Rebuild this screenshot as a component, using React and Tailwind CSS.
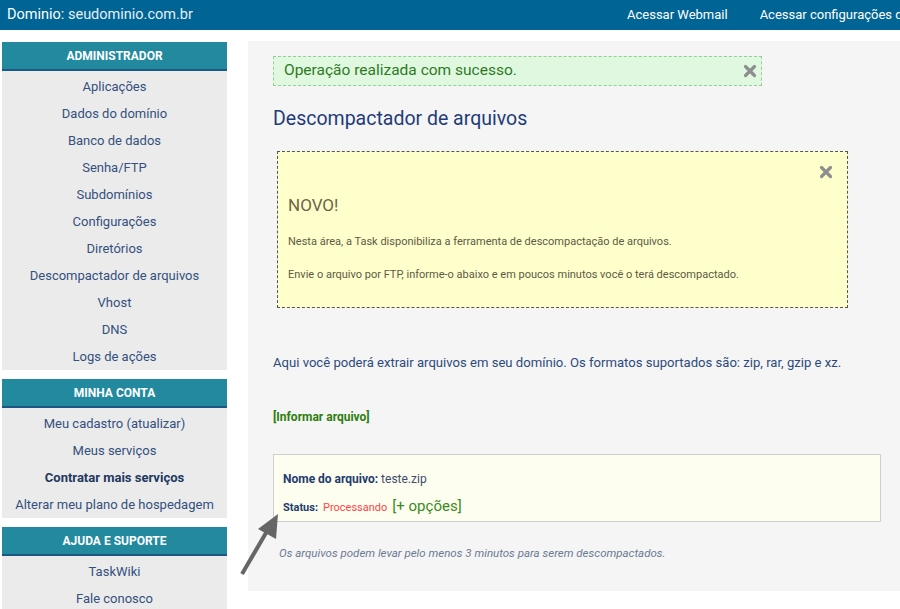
const font = { fontFamily: "Roboto, 'Noto Sans', sans-serif" };

const sections = [
  {
    title: "ADMINISTRADOR",
    items: [
      "Aplicações",
      "Dados do domínio",
      "Banco de dados",
      "Senha/FTP",
      "Subdomínios",
      "Configurações",
      "Diretórios",
      "Descompactador de arquivos",
      "Vhost",
      "DNS",
      "Logs de ações",
    ],
  },
  {
    title: "MINHA CONTA",
    items: [
      "Meu cadastro (atualizar)",
      "Meus serviços",
      "Contratar mais serviços",
      "Alterar meu plano de hospedagem",
    ],
  },
  { title: "AJUDA E SUPORTE", items: ["TaskWiki", "Fale conosco"] },
];

const CloseX = ({ className }) => (
  <svg viewBox="0 0 14 14" className={className}>
    <path d="M2.5 2.5 L11.5 11.5 M11.5 2.5 L2.5 11.5" stroke="#8e8e8e" strokeWidth="3.2" strokeLinecap="round" />
  </svg>
);

export default function App() {
  return (
    <div className="relative w-[900px] h-[609px] overflow-hidden bg-white" style={font}>
      {/* Top bar */}
      <div className="h-[30px] bg-[#006494] flex items-center px-[7px] text-white whitespace-nowrap overflow-hidden">
        <div className="w-[620px] shrink-0 text-[14.5px]">
          Dominio: <span className="text-[#e6f0f6]">seudominio.com.br</span>
        </div>
        <div className="flex gap-[32px] shrink-0 text-[13px]">
          <span>Acessar Webmail</span>
          <span>Acessar configurações de e-mail</span>
        </div>
      </div>

      <div className="flex pt-[12px]">
        {/* Sidebar */}
        <div className="w-[225px] ml-[2px] shrink-0 flex flex-col gap-[9px]">
          {sections.map((s) => (
            <div key={s.title} className="bg-[#ebebeb]">
              <div className="h-[29px] bg-[#22899f] border-b-2 border-[#1b5783] flex items-center justify-center text-white text-[12px] font-bold">
                {s.title}
              </div>
              <div className="pt-[2px]">
                {s.items.map((it) => (
                  <div
                    key={it}
                    className={`h-[27px] flex items-center justify-center text-[13px] ${
                      it === "Contratar mais serviços" ? "font-bold text-[#22385e]" : "text-[#34507e]"
                    }`}
                  >
                    {it}
                  </div>
                ))}
              </div>
            </div>
          ))}
        </div>

        {/* Main panel */}
        <div className="ml-[21px] -mt-[1px] flex-1 h-[550px] bg-[#f5f5f5] pl-[25px] pr-[19px] pt-[15px]">
          <div className="h-[30px] w-[489px] border border-dashed border-[#93d093] bg-[#e0f8e0] flex items-center justify-between pl-[10px] pr-[4px]">
            <span className="text-[15.5px] text-[#2f7a1f]">Operação realizada com sucesso.</span>
            <CloseX className="w-[14px] h-[14px]" />
          </div>

          <h1 className="mt-[20px] text-[19.5px] leading-[26px] text-[#1f3c78]">Descompactador de arquivos</h1>

          <div className="mt-[19px] ml-[4px] w-[571px] h-[157px] border border-dashed border-[#555] bg-[#ffffcc] px-[10px]">
            <div className="flex justify-end pt-[13px] pr-[4px]">
              <CloseX className="w-[14px] h-[14px]" />
            </div>
            <div className="mt-[16px] text-[17px] leading-[20px] text-[#6f6446]">NOVO!</div>
            <p className="mt-[20px] text-[11px] leading-[14px] text-[#5d5a45]">
              Nesta área, a Task disponibiliza a ferramenta de descompactação de arquivos.
            </p>
            <p className="mt-[19px] text-[11px] leading-[14px] text-[#5d5a45]">
              Envie o arquivo por FTP, informe-o abaixo e em poucos minutos você o terá descompactado.
            </p>
          </div>

          <p className="mt-[46px] text-[13.1px] leading-[18px] text-[#2c4a7c]">
            Aqui você poderá extrair arquivos em seu domínio. Os formatos suportados são: zip, rar, gzip e xz.
          </p>

          <div className="mt-[38px] text-[12px] leading-[14px] font-bold text-[#2e7d0e]">[Informar arquivo]</div>

          <div className="mt-[30px] h-[68px] border border-[#cfcfcf] bg-[#fdfdf0] px-[9px] pt-[16px]">
            <div className="text-[12px] leading-[16px] text-[#3d4d6c]">
              <span className="font-bold text-[#1f3c6e]">Nome do arquivo:</span> teste.zip
            </div>
            <div className="mt-[10px] flex items-baseline gap-[5px] text-[11px] leading-[18px]">
              <span className="font-bold text-[#1f3c6e]">Status:</span>
              <span className="text-[#ff4646]">Processando</span>
              <span className="text-[15px] text-[#3a8a20]">[+ opções]</span>
            </div>
          </div>

          <p className="mt-[24px] ml-[6px] italic text-[11.5px] leading-[14px] text-[#6b7a93]">
            Os arquivos podem levar pelo menos 3 minutos para serem descompactados.
          </p>
        </div>
      </div>

      {/* Arrow annotation */}
      <svg className="absolute left-[236px] top-[508px] w-[50px] h-[72px]" viewBox="0 0 50 72">
        <line x1="6" y1="66" x2="34" y2="18" stroke="#666" strokeWidth="4" />
        <polygon points="42,6 22,21 40,31" fill="#666" />
      </svg>
    </div>
  );
}
